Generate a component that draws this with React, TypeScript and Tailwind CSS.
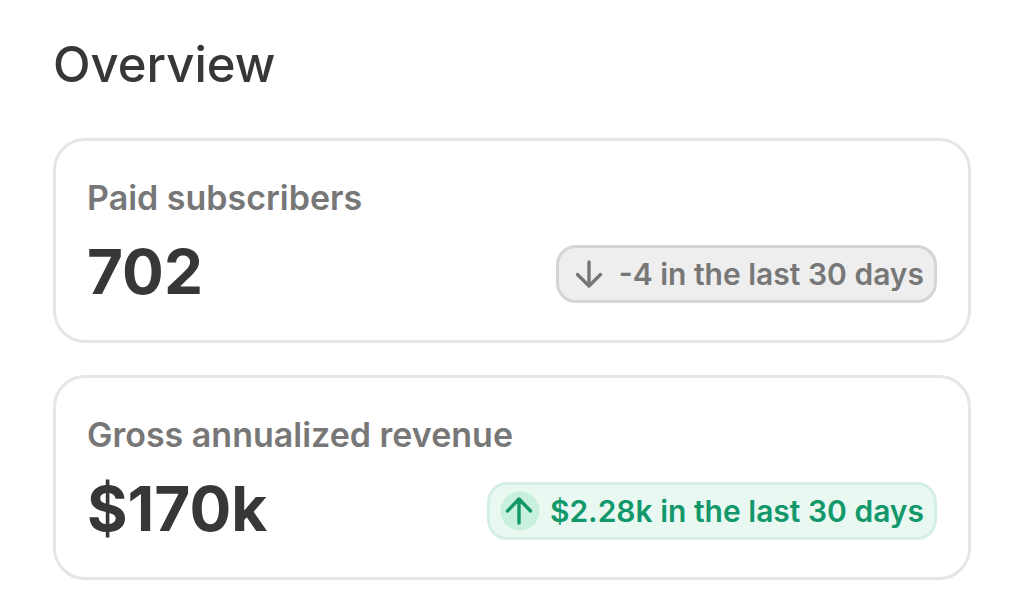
import React from "react";

type Trend = "up" | "down";

const stats: { label: string; value: string; change: string; trend: Trend }[] = [
  {
    label: "Paid subscribers",
    value: "702",
    change: "-4 in the last 30 days",
    trend: "down",
  },
  {
    label: "Gross annualized revenue",
    value: "$170k",
    change: "$2.28k in the last 30 days",
    trend: "up",
  },
];

const Arrow = ({ trend }: { trend: Trend }) => (
  <svg
    aria-hidden="true"
    viewBox="0 0 40 40"
    className="size-10 shrink-0"
    fill="none"
    stroke="currentColor"
    strokeWidth="3.4"
    strokeLinecap="round"
    strokeLinejoin="round"
  >
    {trend === "up" ? (
      <>
        <circle cx="20" cy="20" r="19.5" fill="#c9efdd" stroke="none" />
        <path d="M19 32V8M7.5 20L19 8l11.5 12" />
      </>
    ) : (
      <path d="M20 8v24M8.5 20.5L20 32l11.5-11.5" />
    )}
  </svg>
);

const Badge = ({ trend, text }: { trend: Trend; text: string }) => (
  <div
    className={`flex h-[58px] items-center gap-[10px] rounded-[20px] border-3 px-[10px] text-[30px] font-semibold whitespace-nowrap ${
      trend === "up"
        ? "border-[#d6efe4] bg-[#e9f9f2] text-[#12986a]"
        : "border-[#d5d5d5] bg-[#eeeeee] text-[#777777]"
    }`}
  >
    <Arrow trend={trend} />
    <span>{text}</span>
  </div>
);

const App = () => {
  return (
    <main className="bg-white px-[53px] pt-[35px] pb-5 font-['Inter',sans-serif] text-[#363737]">
      <h1 className="text-[49px] leading-[60px] font-medium">Overview</h1>
      <div className="mt-[43px] flex flex-col gap-8">
        {stats.map((stat) => (
          <section
            key={stat.label}
            className="rounded-[32px] border-3 border-[#e6e6e6] px-[31px] pt-[35px] pb-[37px]"
          >
            <h2 className="text-[34px] leading-[44px] font-semibold text-[#777777]">
              {stat.label}
            </h2>
            <div className="mt-5 flex items-end justify-between">
              <p className="text-[62px] leading-[63px] font-bold">{stat.value}</p>
              <Badge trend={stat.trend} text={stat.change} />
            </div>
          </section>
        ))}
      </div>
    </main>
  );
};

export default App;
